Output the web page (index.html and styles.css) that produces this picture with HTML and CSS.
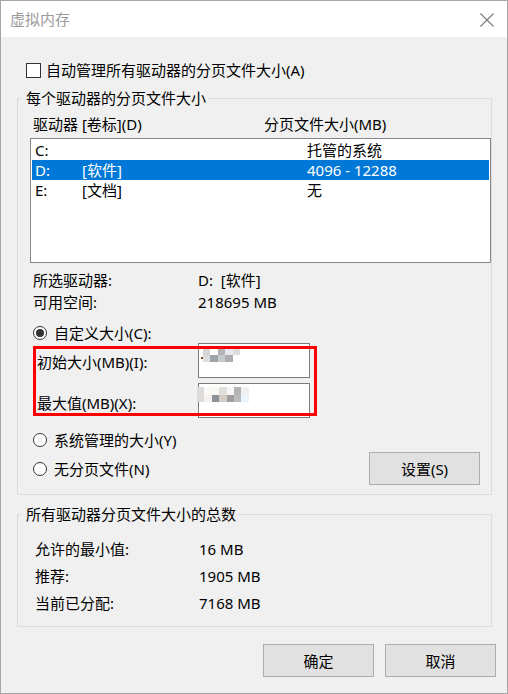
FILE: index.html
```html
<!DOCTYPE html>
<html lang="zh-CN">
<head>
<meta charset="utf-8">
<title>虚拟内存</title>
<link rel="stylesheet" href="styles.css">
</head>
<body>
<div class="window">
  <div class="titlebar">
    <span class="title">虚拟内存</span>
    <svg class="close" width="14" height="14" viewBox="0 0 14 14"><path d="M0.5 0.5 L13.5 13.5 M13.5 0.5 L0.5 13.5" stroke="#7a7a7a" stroke-width="1.1" fill="none"/></svg>
  </div>
  <div class="content">
    <div class="check-row"><span class="checkbox"></span><span>自动管理所有驱动器的分页文件大小(A)</span></div>

    <fieldset class="group group-drives">
      <legend>每个驱动器的分页文件大小</legend>
      <div class="group-body">
        <div class="list-head"><span>驱动器 [卷标](D)</span><span>分页文件大小(MB)</span></div>
        <div class="listbox">
          <div class="lrow"><span>C:</span><span></span><span>托管的系统</span></div>
          <div class="lrow selected"><span>D:</span><span>[软件]</span><span>4096 - 12288</span></div>
          <div class="lrow"><span>E:</span><span>[文档]</span><span>无</span></div>
        </div>
        <div class="info">
          <span>所选驱动器:</span><span>D:&nbsp; [软件]</span>
          <span>可用空间:</span><span>218695 MB</span>
        </div>
        <div class="radio-row r-custom"><span class="radio checked"></span><span>自定义大小(C):</span></div>
        <div class="custom">
          <div class="field-row">
            <span class="flabel">初始大小(MB)(I):</span>
            <div class="input">
              <div class="mosaic m1">
                <i class="g1"></i><i class="w"></i><i class="g3"></i><i class="b1"></i><i class="g2"></i>
                <i class="g2"></i><i class="d1"></i><i class="g4"></i><i class="d2"></i><i class="w"></i>
              </div>
              <span class="dot"></span>
            </div>
          </div>
          <div class="field-row">
            <span class="flabel">最大值(MB)(X):</span>
            <div class="input">
              <div class="mosaic m2">
                <i class="g2"></i><i class="p1"></i><i class="p2"></i><i class="p3"></i><i class="p4"></i><i class="g3"></i><i class="p5"></i>
                <i class="g2"></i><i class="p6"></i><i class="d3"></i><i class="p7"></i><i class="d4"></i><i class="g5"></i><i class="b2"></i>
              </div>
            </div>
          </div>
          <div class="highlight"></div>
        </div>
        <div class="radio-row r-system"><span class="radio"></span><span>系统管理的大小(Y)</span></div>
        <div class="radio-row r-none">
          <span class="radio"></span><span>无分页文件(N)</span>
          <button class="btn btn-set">设置(S)</button>
        </div>
      </div>
    </fieldset>

    <fieldset class="group group-total">
      <legend>所有驱动器分页文件大小的总数</legend>
      <div class="totals">
        <span>允许的最小值:</span><span>16 MB</span>
        <span>推荐:</span><span>1905 MB</span>
        <span>当前已分配:</span><span>7168 MB</span>
      </div>
    </fieldset>

    <div class="actions">
      <button class="btn">确定</button>
      <button class="btn">取消</button>
    </div>
  </div>
</div>
</body>
</html>
```

FILE: styles.css
```css
* { box-sizing: border-box; }
html, body { margin: 0; padding: 0; background: #f0f0f0; }
body {
  font-family: "Noto Sans", "Noto Sans CJK SC", sans-serif;
  font-size: 15px;
  color: #000;
}
.window {
  width: 508px;
  height: 694px;
  border: 1px solid #a6a6a6;
  background: #f0f0f0;
  overflow: hidden;
}
.titlebar {
  height: 36px;
  background: #fff;
  display: flex;
  align-items: center;
  justify-content: space-between;
  padding: 0 13px 0 9px;
}
.title { color: #9b9b9b; line-height: 20px; }
.close { display: block; margin-top: 1px; }
.content { padding: 23px 11px 0 16px; }
.check-row {
  display: flex;
  align-items: center;
  height: 20px;
  line-height: 20px;
  padding-left: 9px;
  gap: 5px;
}
.checkbox {
  width: 15px; height: 15px;
  border: 1px solid #333;
  background: #fff;
  flex: none;
}
.group {
  width: 475px;
  margin: 0;
  padding: 0;
  border: 1px solid #dcdcdc;
  min-width: 0;
}
.group legend {
  margin-left: 3px;
  padding: 0 2px 0 5px;
  line-height: 20px;
  height: 20px;
}
.group-drives { margin-top: 8px; }
.group-body { padding: 6px 0 9px 12px; }
.list-head {
  display: grid;
  grid-template-columns: 231px 1fr;
  padding-left: 3px;
  height: 20px;
  line-height: 20px;
}
.listbox {
  margin-top: 4px;
  height: 125px;
  border: 1px solid #828790;
  background: #fff;
  padding: 1px;
}
.lrow {
  display: grid;
  grid-template-columns: 47px 225px 1fr;
  height: 20px;
  line-height: 20px;
  padding-left: 3px;
}
.lrow.selected { background: #0078d7; color: #fff; }
.info {
  margin-top: 6px;
  display: grid;
  grid-template-columns: 165px 1fr;
  grid-auto-rows: 22px;
  line-height: 22px;
  padding-left: 3px;
}
.radio-row {
  display: flex;
  align-items: center;
  height: 20px;
  line-height: 20px;
  padding-left: 3px;
}
.radio {
  width: 14px; height: 14px;
  border: 1px solid #333;
  border-radius: 50%;
  background: #fff;
  margin-right: 7px;
  flex: none;
  display: flex;
  align-items: center;
  justify-content: center;
}
.radio.checked::after {
  content: "";
  width: 8px; height: 8px;
  border-radius: 50%;
  background: #333;
}
.r-custom { margin-top: 10px; }
.custom { position: relative; }
.field-row {
  display: flex;
  align-items: center;
  padding-left: 7px;
}
.field-row + .field-row { margin-top: 5px; }
.flabel { width: 161px; line-height: 20px; margin-top: 2px; }
.field-row + .field-row .flabel { margin-top: 4px; }
.input {
  position: relative;
  width: 112px;
  height: 35px;
  border: 1px solid #7a7a7a;
  background: #fff;
}
.mosaic { position: absolute; display: grid; grid-auto-rows: 7.5px; }
.mosaic i { display: block; }
.m1 { left: 4px; top: 3px; grid-template-columns: repeat(5, 7.4px); }
.m2 { left: -2px; top: 3px; grid-template-columns: repeat(7, 7.4px); }
.dot { position: absolute; left: 2px; top: 13px; width: 2px; height: 2px; background: #7a4a10; }
.w { background: #fff; }
.g1 { background: #d5d5d5; }
.g2 { background: #dcdcdc; }
.g3 { background: #b3b3b3; }
.g4 { background: #c5cbca; }
.g5 { background: #b9bdc0; }
.b1 { background: #e6e9ef; }
.b2 { background: #eaf4fc; }
.d1 { background: #9ea5aa; }
.d2 { background: #aeadb0; }
.d3 { background: #8b9197; }
.d4 { background: #a09d9c; }
.p1 { background: #fbf8f5; }
.p2 { background: #f9f7f4; }
.p3 { background: #e0dedb; }
.p4 { background: #f6f6f6; }
.p5 { background: #f0f0f0; }
.p6 { background: #f5f1ee; }
.p7 { background: #d3cbc6; }
.highlight {
  position: absolute;
  left: 3px;
  top: 3px;
  width: 284px;
  height: 70px;
  border: 3px solid #ff0000;
  pointer-events: none;
}
.r-system { margin-top: 12px; }
.r-none { margin-top: 2px; height: 33px; }
.btn {
  font: inherit;
  color: #000;
  width: 111px;
  height: 33px;
  background: #e1e1e1;
  border: 1px solid #adadad;
  padding: 0;
  line-height: 20px;
}
.btn-set { margin-left: auto; margin-right: 11px; }
.group-total { margin-top: 9px; }
.totals {
  display: grid;
  grid-template-columns: 164px 1fr;
  grid-auto-rows: 27px;
  line-height: 27px;
  padding: 12px 0 9px 17px;
}
.actions {
  display: flex;
  justify-content: flex-end;
  gap: 11px;
  margin-top: 17px;
}
```
